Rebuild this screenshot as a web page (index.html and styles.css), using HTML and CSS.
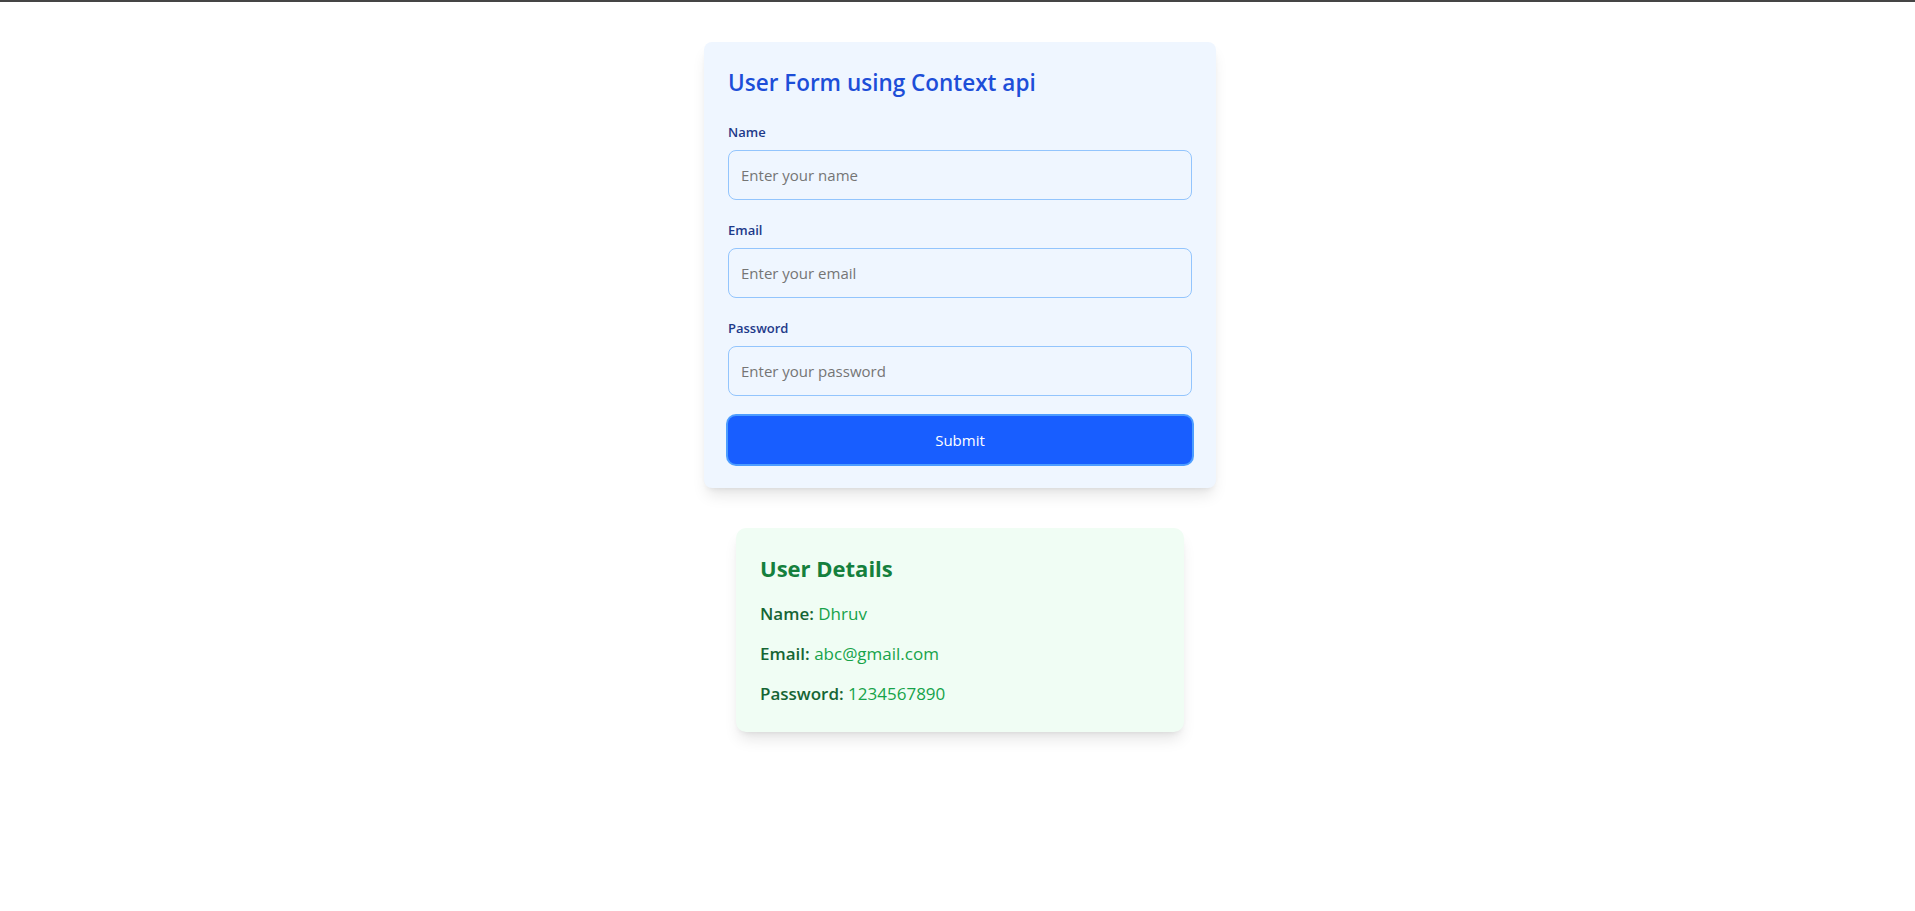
FILE: index.html
```html
<!DOCTYPE html>
<html lang="en">
<head>
<meta charset="utf-8">
<title>User Form using Context api</title>
<link rel="stylesheet" href="styles.css">
</head>
<body>
<div class="topbar"></div>
<main class="page">
  <form class="form-card" onsubmit="return false;">
    <h2 class="form-title">User Form using Context api</h2>
    <div class="field">
      <label class="field-label" for="name">Name</label>
      <input class="field-input" id="name" type="text" placeholder="Enter your name">
    </div>
    <div class="field">
      <label class="field-label" for="email">Email</label>
      <input class="field-input" id="email" type="email" placeholder="Enter your email">
    </div>
    <div class="field">
      <label class="field-label" for="password">Password</label>
      <input class="field-input" id="password" type="password" placeholder="Enter your password">
    </div>
    <button class="submit-btn" type="submit">Submit</button>
  </form>

  <section class="details-card">
    <h2 class="details-title">User Details</h2>
    <p class="details-row"><span class="details-key">Name:</span> <span class="details-val">Dhruv</span></p>
    <p class="details-row"><span class="details-key">Email:</span> <span class="details-val">abc@gmail.com</span></p>
    <p class="details-row"><span class="details-key">Password:</span> <span class="details-val">1234567890</span></p>
  </section>
</main>
</body>
</html>
```

FILE: styles.css
```css
* {
  box-sizing: border-box;
}

html, body {
  margin: 0;
  padding: 0;
  background: #ffffff;
}

body {
  font-family: "Open Sans", "Noto Sans", sans-serif;
  color: #111827;
}

.topbar {
  height: 2px;
  background: #454545;
}

.page {
  display: flex;
  flex-direction: column;
  align-items: center;
  gap: 40px;
  padding: 40px 0 40px 5px;
}

.form-card {
  width: 512px;
  padding: 24px;
  background: #eff6ff;
  border-radius: 8px;
  box-shadow: 0 10px 15px -3px rgba(0, 0, 0, 0.1), 0 4px 6px -4px rgba(0, 0, 0, 0.1);
  margin: 0;
}

.form-title {
  margin: 0 0 23px;
  padding-top: 1px;
  font-size: 22.5px;
  line-height: 32px;
  font-weight: 600;
  color: #1d4ed8;
}

.field {
  margin-bottom: 20px;
}

.field-label {
  display: block;
  margin-bottom: 8px;
  font-size: 13px;
  line-height: 20px;
  font-weight: 600;
  color: #1e3a8a;
}

.field-input {
  display: block;
  width: 100%;
  height: 50px;
  padding: 0 12px;
  border: 1px solid #93c5fd;
  border-radius: 8px;
  background: transparent;
  font-family: inherit;
  font-size: 15px;
  color: #111827;
  outline: none;
}

.field-input::placeholder {
  color: #757575;
}

.submit-btn {
  display: block;
  width: 100%;
  height: 48px;
  border: none;
  border-radius: 8px;
  background: #185eff;
  box-shadow: 0 0 0 2px #4d9dff;
  color: #ffffff;
  font-family: inherit;
  font-size: 15px;
  line-height: 24px;
  cursor: pointer;
}

.details-card {
  width: 448px;
  padding: 24px;
  background: #f0fdf4;
  border-radius: 10px;
  box-shadow: 0 10px 15px -3px rgba(0, 0, 0, 0.1), 0 4px 6px -4px rgba(0, 0, 0, 0.1);
}

.details-title {
  margin: 0 0 16px;
  font-size: 22px;
  line-height: 32px;
  font-weight: 700;
  color: #15803d;
}

.details-row {
  margin: 0 0 12px;
  font-size: 17px;
  line-height: 28px;
}

.details-row:last-child {
  margin-bottom: 0;
}

.details-key {
  font-weight: 600;
  color: #166534;
}

.details-val {
  color: #16a34a;
}
```
